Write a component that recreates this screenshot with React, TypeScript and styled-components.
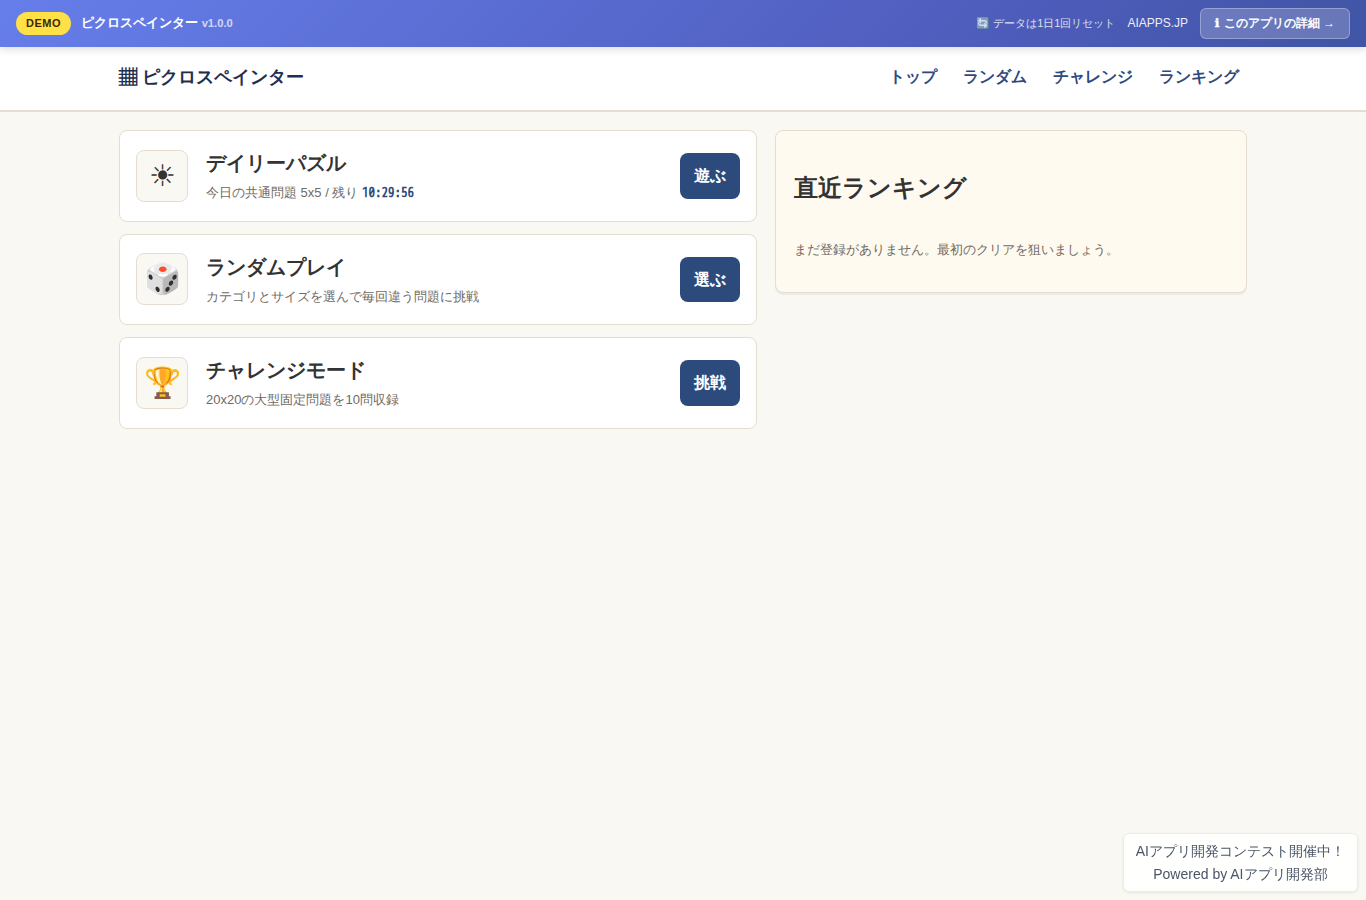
import React from "react";
import styled, { createGlobalStyle } from "styled-components";

const sans = `"Liberation Sans", sans-serif`;

const GlobalStyle = createGlobalStyle`
  * { box-sizing: border-box; }
  body {
    margin: 0;
    background: #faf8f3;
    color: #333;
    font-family: ${sans};
    font-size: 16px;
    line-height: 1.6;
  }
  a { text-decoration: none; }
`;

const DemoBar = styled.div`
  position: relative;
  z-index: 2;
  display: flex;
  align-items: center;
  justify-content: space-between;
  height: 47px;
  padding: 0 16px;
  background: linear-gradient(135deg, #667eea 0%, #4f5dbd 70%, #4055a5 100%);
  box-shadow: 0 2px 8px rgba(0, 0, 0, 0.15);
  color: #fff;
  font-size: 13px;
  line-height: 1.4;
`;

const BarGroup = styled.div<{ $gap: number }>`
  display: flex;
  align-items: center;
  gap: ${(p) => p.$gap}px;
`;

const DemoBadge = styled.span`
  padding: 4px 10px;
  border-radius: 12px;
  background: #ffe045;
  color: #3d2600;
  font-size: 11px;
  font-weight: 700;
  letter-spacing: 0.5px;
`;

const AppName = styled.span`
  font-weight: 600;
`;

const Version = styled.span`
  font-size: 11.2px;
  opacity: 0.7;
`;

const ResetNote = styled.span`
  font-size: 11px;
  opacity: 0.8;
`;

const SiteLink = styled.a`
  color: #fff;
  font-size: 12px;
  opacity: 0.9;
`;

const DetailButton = styled.a`
  padding: 6px 14px;
  border: 1px solid rgba(255, 255, 255, 0.3);
  border-radius: 6px;
  background: rgba(255, 255, 255, 0.2);
  color: #fff;
  font-size: 12px;
  font-weight: 600;
`;

const InfoGlyph = styled.span`
  margin-right: 0.7px;
  font-family: "DejaVu Sans", sans-serif;
  line-height: 1;
  -webkit-text-stroke: 0.5px #fff;
`;

const Header = styled.header`
  height: 65px;
  border-bottom: 2px solid #e6dccf;
  background: #fff;
`;

const HeaderInner = styled.div`
  display: flex;
  align-items: center;
  justify-content: space-between;
  width: 1128px;
  height: 60px;
  margin: 0 auto;
`;

const Brand = styled.a`
  color: #1f2f4f;
  font-size: 18px;
  font-weight: 700;
`;

const Nav = styled.nav`
  display: flex;
  gap: 10px;
`;

const NavLink = styled.a`
  padding: 0 8px;
  color: #2c4a7c;
  font-weight: 600;
`;

const Main = styled.main`
  display: grid;
  grid-template-columns: 1.35fr 1fr;
  align-items: start;
  gap: 18px;
  width: 1128px;
  margin: 18px auto 0;
`;

const ModeList = styled.div`
  display: grid;
  gap: 12px;
`;

const ModeCard = styled.article`
  display: grid;
  grid-template-columns: 52px 1fr auto;
  align-items: center;
  gap: 18px;
  padding: 16px;
  border: 1px solid #e6dccf;
  border-radius: 8px;
  background: #fff;
`;

const ModeIcon = styled.div`
  display: grid;
  place-items: center;
  height: 52px;
  border: 1px solid #e6dccf;
  border-radius: 8px;
  background: #faf8f3;
  font-size: 30px;
  line-height: 1;
`;

const ModeTitle = styled.h2`
  margin: 0;
  font-size: 20px;
`;

const ModeText = styled.div`
  height: 25.6px;
`;

const Muted = styled.span`
  color: #6f6a63;
  font-size: 13px;
`;

const Countdown = styled.strong`
  color: #2c4a7c;
  font-family: "WenQuanYi Zen Hei Mono", "Noto Sans Mono CJK JP", monospace;
  font-weight: 900;
`;

const PlayButton = styled.a`
  padding: 10px 14px;
  border-radius: 8px;
  background: #2c4a7c;
  color: #fff;
  font-weight: 700;
`;

const RankingPanel = styled.aside`
  display: grid;
  padding: 18px;
  border: 1px solid #e6dccf;
  border-radius: 8px;
  background: #fffaf0;
  box-shadow: 0 2px 0 rgba(31, 31, 63, 0.06);
`;

const RankingTitle = styled.h2`
  margin: 19.92px 0;
  font-size: 24px;
`;

const RankingEmpty = styled.p`
  margin: 13px 0;
  color: #6f6a63;
  font-size: 13px;
`;

const Credit = styled.div`
  position: fixed;
  right: 8px;
  bottom: 8px;
  padding: 6px 12px 5px;
  border: 1px solid #eeece8;
  border-radius: 6px;
  background: #fffffd;
  box-shadow: 0 1px 3px rgba(0, 0, 0, 0.08);
  color: #4a5568;
  font-size: 14px;
  line-height: 23px;
  text-align: center;
`;

interface Mode {
  icon: string;
  title: string;
  text: string;
  countdown?: string;
  action: string;
}

const modes: Mode[] = [
  { icon: "☀", title: "デイリーパズル", text: "今日の共通問題 5x5 / 残り ", countdown: "10:29:56", action: "遊ぶ" },
  { icon: "🎲", title: "ランダムプレイ", text: "カテゴリとサイズを選んで毎回違う問題に挑戦", action: "選ぶ" },
  { icon: "🏆", title: "チャレンジモード", text: "20x20の大型固定問題を10問収録", action: "挑戦" },
];

export default function App() {
  return (
    <>
      <GlobalStyle />
      <DemoBar>
        <BarGroup $gap={10}>
          <DemoBadge>DEMO</DemoBadge>
          <AppName>
            ピクロスペインター <Version>v1.0.0</Version>
          </AppName>
        </BarGroup>
        <BarGroup $gap={12}>
          <ResetNote>🔄 データは1日1回リセット</ResetNote>
          <SiteLink>AIAPPS.JP</SiteLink>
          <DetailButton>
            <InfoGlyph>ℹ</InfoGlyph> このアプリの詳細 →
          </DetailButton>
        </BarGroup>
      </DemoBar>
      <Header>
        <HeaderInner>
          <Brand>▦ ピクロスペインター</Brand>
          <Nav>
            {["トップ", "ランダム", "チャレンジ", "ランキング"].map((label) => (
              <NavLink key={label}>{label}</NavLink>
            ))}
          </Nav>
        </HeaderInner>
      </Header>
      <Main>
        <ModeList>
          {modes.map((mode) => (
            <ModeCard key={mode.title}>
              <ModeIcon>{mode.icon}</ModeIcon>
              <div>
                <ModeTitle>{mode.title}</ModeTitle>
                <ModeText>
                  <Muted>
                    {mode.text}
                    {mode.countdown && <Countdown>{mode.countdown}</Countdown>}
                  </Muted>
                </ModeText>
              </div>
              <PlayButton>{mode.action}</PlayButton>
            </ModeCard>
          ))}
        </ModeList>
        <RankingPanel>
          <RankingTitle>直近ランキング</RankingTitle>
          <RankingEmpty>まだ登録がありません。最初のクリアを狙いましょう。</RankingEmpty>
        </RankingPanel>
      </Main>
      <Credit>
        <div>AIアプリ開発コンテスト開催中！</div>
        <div>Powered by AIアプリ開発部</div>
      </Credit>
    </>
  );
}
